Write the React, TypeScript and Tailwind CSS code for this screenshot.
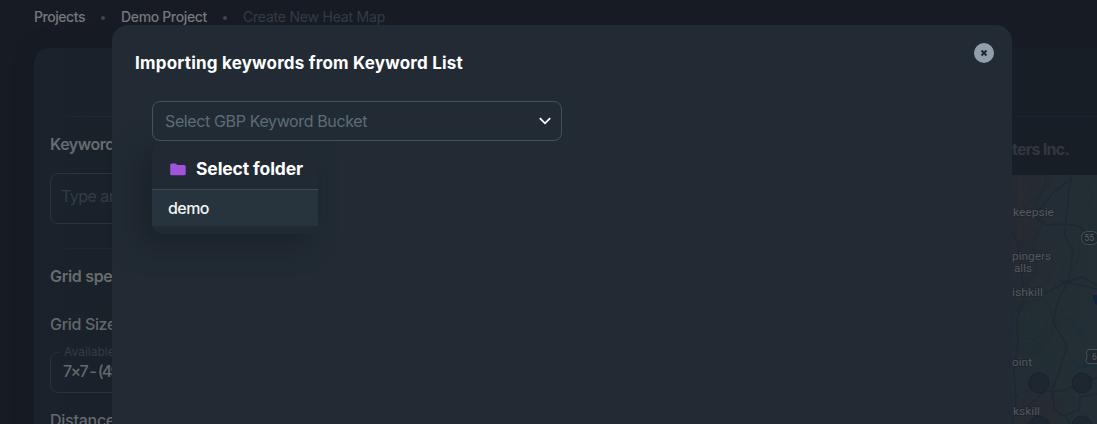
import React from "react";

const font = "font-['Inter','Liberation_Sans',sans-serif]";

function T({ children, className, w }: { children: React.ReactNode; className: string; w?: number }) {
  const ref = React.useRef<HTMLSpanElement>(null);
  React.useLayoutEffect(() => {
    const el = ref.current;
    if (!el || !w) return;
    const fit = () => {
      el.style.letterSpacing = "0px";
      const n = (el.textContent || "").length;
      el.style.letterSpacing = (w - el.getBoundingClientRect().width) / n + "px";
    };
    fit();
    document.fonts.ready.then(fit);
  }, [w]);
  return (
    <span ref={ref} className={"inline-block whitespace-nowrap " + className}>
      {children}
    </span>
  );
}

function RegionMap() {
  return (
    <svg className="block h-full w-full" viewBox="1012 175 85 249" preserveAspectRatio="none" fontFamily="Roboto, sans-serif">
      <defs>
        <linearGradient id="land" x1="0" y1="0" x2="1" y2="0.5">
          <stop offset="0" stopColor="#242a31" />
          <stop offset="0.4" stopColor="#232d33" />
          <stop offset="1" stopColor="#232f34" />
        </linearGradient>
        <filter id="soft" x="-20%" y="-20%" width="140%" height="140%">
          <feGaussianBlur stdDeviation="4" />
        </filter>
      </defs>
      <rect x="1012" y="175" width="85" height="249" fill="url(#land)" />
      <g filter="url(#soft)">
        <path d="M1012 177H1042L1027 202L1036 223L1025 243L1031 267L1012 290Z" fill="#262a31" />
        <path d="M1026 398L1050 391L1070 402L1060 424H1012V410Z" fill="#252b33" />
        <path d="M1020 313L1042 305L1049 328L1032 349L1018 343Z" fill="#212f31" />
      </g>
      <g fill="none" stroke="#1e2832" strokeWidth="1.6">
        <path d="M1072 175L1069 190L1067 210L1065 236L1073 250L1069 280L1058 301L1053 322L1067 346L1059 373L1052 390L1055 410L1066 417L1070 424" />
        <path d="M1012 232L1018 244L1022 275L1024 299L1017 318L1018 343L1014 372L1016 400L1012 424" />
        <path d="M1034 216L1046 225L1066 224L1079 226L1097 244" />
        <path d="M1071 179L1054 192L1036 214" />
        <path d="M1024 290L1045 293L1067 282L1082 277L1097 285M1060 281L1097 289" />
        <path d="M1025 409L1045 391L1063 391L1076 385L1097 378M1066 415L1079 410L1080 397L1097 394" />
      </g>
      <g fill="none" stroke="#1e2a32" strokeWidth="0.7">
        <path d="M1053 176L1046 190L1027 205L1019 221M1090 180L1091 202L1080 221M1080 238L1079 255L1073 271" />
        <path d="M1012 338L1035 339L1052 323L1070 318L1080 334L1097 348" />
        <path d="M1052 250L1058 269L1048 291" stroke="#30303a" />
      </g>
      <path d="M1076 363l6 2 3-3 2 5-4 3-7-1zM1040 353l3 6-1 4-3-5zM1078 327l5 3-1 4-4-4z" fill="#1c2f39" />
      <g fill="#55595e" stroke="#1d262d" strokeWidth="1.4" paintOrder="stroke" fontSize="11.5">
        <text x="1013" y="215.500" textLength="41" lengthAdjust="spacingAndGlyphs">keepsie</text>
        <text x="1012" y="259.500" textLength="39" lengthAdjust="spacingAndGlyphs">pingers</text>
        <text x="1014" y="271.500" textLength="18" lengthAdjust="spacingAndGlyphs">alls</text>
        <text x="1012" y="295.500" textLength="31" lengthAdjust="spacingAndGlyphs">ishkill</text>
        <text x="1012" y="365.500" textLength="20" lengthAdjust="spacingAndGlyphs">oint</text>
        <text x="1013" y="414.500" textLength="27" lengthAdjust="spacingAndGlyphs">kskill</text>
      </g>
      <rect x="1081.500" y="231.500" width="17" height="13" rx="6" fill="#20292f" stroke="#454c52" />
      <text x="1084.500" y="241" fontSize="8.500" fill="#5a6065">55</text>
      <path d="M1097 349.500H1088L1086.500 352L1087 357L1086 361L1088 363.500H1097" fill="#20292f" stroke="#464f56" />
      <text x="1092" y="360" fontSize="8.500" fill="#5a6065">6</text>
      <path d="M1093 295H1097V305Q1093 302 1093 295" fill="#14233d" />
      <path d="M1093 293H1097" stroke="#49262f" />
      <g fill="#1e262f" stroke="#171f28" strokeWidth="0.7">
        <circle cx="1039" cy="383" r="10" />
        <circle cx="1082" cy="383" r="10" />
        <circle cx="1039" cy="426" r="10" />
        <circle cx="1082" cy="426" r="10" />
      </g>
    </svg>
  );
}

function Backdrop() {
  return (
    <div className="flex h-full flex-col">
      <nav className="flex h-[48px] shrink-0 items-start pl-[34px] pt-[7px] text-[14px] leading-5">
        <T w={51} className="font-medium text-[#76787b]">Projects</T>
        <i className="ml-4 mr-4 mt-[9px] size-1 rounded-full bg-[#40464e]" />
        <T w={86} className="font-medium text-[#76787b]">Demo Project</T>
        <i className="ml-4 mr-4 mt-[9px] size-1 rounded-full bg-[#40464e]" />
        <T w={142} className="text-[#343b43]">Create New Heat Map</T>
      </nav>
      <div className="flex min-h-0 flex-1 justify-between">
        <aside className="ml-[34px] w-[320px] rounded-tl-[16px] bg-gradient-to-r from-[#1a232b] to-[#151b23] pl-4 pt-[68px] shadow-[0_0_18px_#141a21]">
          <div className="ml-4 h-px bg-[#20282f]" />
          <div className="mt-[15px] text-[16px] leading-6">
            <T w={73} className="font-semibold text-[#686b6f]">Keywords</T>
          </div>
          <div className="mt-[17px] h-[51px] rounded-[8px] border border-[#2b333b] pl-[10px] pt-[10px] text-[16px] leading-6">
            <T w={66} className="text-[#343c44]">Type and</T>
          </div>
          <div className="ml-4 mt-6 h-px bg-[#20282f]" />
          <div className="mt-[15px] text-[16px] leading-6">
            <T w={140} className="font-semibold text-[#696c70]">Grid specifications</T>
          </div>
          <div className="mt-6 text-[16px] leading-6">
            <T w={66} className="font-medium text-[#64686c]">Grid Size</T>
          </div>
          <fieldset className="mt-[8px] h-[49px] rounded-[8px] border border-[#293139] pl-3">
            <legend className="-ml-[4px] px-[5px] text-[12px] leading-4 text-[#353d45]">Available options</legend>
            <div className="-mt-px text-[16px] leading-6">
              <T w={56} className="font-medium text-[#65696c]">7×7 - (49</T>
            </div>
          </fieldset>
          <div className="mt-[15px] text-[16px] leading-6">
            <T w={65} className="font-medium text-[#64686c]">Distance</T>
          </div>
        </aside>
        <section className="flex w-[85px] flex-col bg-[#171e26]">
          <div className="mt-[68px] h-px bg-[#1b242c]" />
          <div className="h-[58px] pt-[20px] text-[16px] leading-6">
            <T w={57} className="font-bold text-[#32373f]">ters Inc.</T>
          </div>
          <div className="min-h-0 flex-1">
            <RegionMap />
          </div>
        </section>
      </div>
    </div>
  );
}

function FolderMenu() {
  return (
    <div className="absolute left-0 top-[40px] h-[93px] w-[166px] rounded-[12px] bg-[#212a33] shadow-[-12px_10px_28px_rgba(20,26,33,0.6)]">
      <div className="flex h-[49px] items-center border-b border-[#3c4952] pl-[18px] pt-2">
        <svg width="16" height="13" viewBox="0 0 16 13">
          <path d="M1.600 .5H5.700L7.200 2H14.200Q15.700 2 15.700 3.500V10.700Q15.700 12.300 14.100 12.300H1.700Q.2 12.300 .2 10.700V2Q.2 .5 1.600 .5Z" fill="#9f54d9" />
        </svg>
        <div className="ml-[10px] text-[17.500px] leading-6">
          <T w={107} className="font-bold text-white">Select folder</T>
        </div>
      </div>
      <div className="flex h-[36px] items-center bg-[#28343d] pl-4 text-[16px] leading-6">
        <T w={41} className="font-medium text-[#f1f3f4]">demo</T>
      </div>
    </div>
  );
}

export default function App() {
  return (
    <div className={"relative h-[424px] w-full overflow-hidden bg-[#171c24] " + font}>
      <Backdrop />
      <div className="absolute left-[112px] top-[25px] h-[420px] w-[900px] rounded-[16px] bg-[#222b34]">
        <header className="flex justify-between pl-[23px] pr-[18px] pt-[18px]">
          <h1 className="pt-[8px] text-[17px] leading-6">
            <T w={328} className="font-bold text-white">Importing keywords from Keyword List</T>
          </h1>
          <button aria-label="Close" className="flex size-5 items-center justify-center rounded-full bg-[#919eab]">
            <svg width="8" height="8" viewBox="0 0 8 8">
              <path d="M1.500 1.500L6.500 6.500M6.500 1.500L1.500 6.500" stroke="#222b34" strokeWidth="2.200" />
            </svg>
          </button>
        </header>
        <div className="relative ml-10 mt-[26px] h-10 w-[410px]">
          <FolderMenu />
          <div className="relative flex h-full items-center justify-between rounded-[8px] border border-[#45525c] bg-[#222b34] pl-[12px] pr-[10px] text-[16px]">
            <T w={202} className="-mt-px text-[#5d6b77]">Select GBP Keyword Bucket</T>
            <svg width="12" height="8" viewBox="0 0 12 8" fill="none">
              <path d="M.8 1.200L6 6.300L11.200 1.200" stroke="#fff" strokeWidth="1.800" />
            </svg>
          </div>
        </div>
      </div>
    </div>
  );
}
